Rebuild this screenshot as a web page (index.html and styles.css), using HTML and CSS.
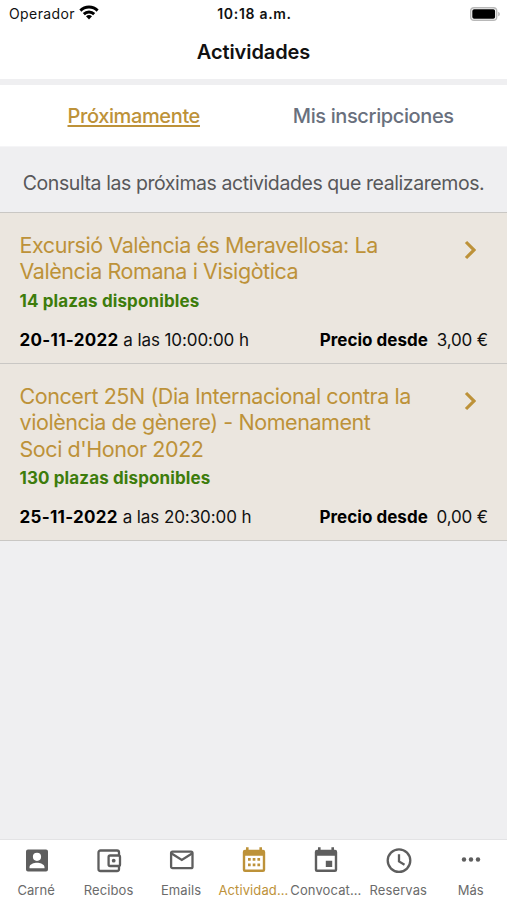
FILE: index.html
```html
<!DOCTYPE html>
<html lang="es">
<head>
  <meta charset="UTF-8" />
  <meta name="viewport" content="width=device-width, initial-scale=1" />
  <title>Actividades</title>
  <link rel="stylesheet" href="styles.css">
</head>
<body>

<header class="header">
  <div class="status-bar">
    <div class="carrier">
      <span>Operador</span>
      <svg class="wifi" viewBox="0 0 18 14">
        <path d="M0 4.3a12.7 12.7 0 0 1 18 0l-1.9 2a10.1 10.1 0 0 0-14.2 0z" />
        <path d="M3.2 7.5a8.2 8.2 0 0 1 11.6 0l-1.9 2a5.5 5.5 0 0 0-7.8 0z" />
        <path d="M6.2 10.6a4 4 0 0 1 5.6 0L9 13.5z" />
      </svg>
    </div>
    <span class="time">10:18 a.m.</span>
    <svg class="battery" viewBox="0 0 31 14">
      <rect x=".7" y=".7" width="26" height="12.6" rx="3.4" fill="#fff" stroke="#b8b8b8" stroke-width="1.4" />
      <rect x="2.3" y="2.3" width="22.8" height="9.4" rx="1.8" />
      <path d="M28.2 4.7c2.2.8 2.2 3.8 0 4.6z" fill="#b8b8b8" />
    </svg>
  </div>
  <h1>Actividades</h1>
</header>

<nav class="tabs">
  <a class="tab active"><span>Próximamente</span></a>
  <a class="tab"><span>Mis inscripciones</span></a>
</nav>

<main class="content">
  <p class="intro">Consulta las próximas actividades que realizaremos.</p>

  <article class="activity">
    <div class="activity-top">
      <h2>Excursió València és Meravellosa: La<br>València Romana i Visigòtica</h2>
      <svg class="chevron" viewBox="0 0 12 20"><path d="M2 2 9.9 10 2 18" /></svg>
    </div>
    <p class="places">14 plazas disponibles</p>
    <div class="details">
      <span class="date"><b>20-11-2022</b> <span>a las 10:00:00 h</span></span>
      <span class="price"><b>Precio desde</b> <span>3,00 €</span></span>
    </div>
  </article>

  <article class="activity">
    <div class="activity-top">
      <h2>Concert 25N (Dia Internacional contra la<br>violència de gènere) - Nomenament<br>Soci d'Honor 2022</h2>
      <svg class="chevron" viewBox="0 0 12 20"><path d="M2 2 9.9 10 2 18" /></svg>
    </div>
    <p class="places">130 plazas disponibles</p>
    <div class="details">
      <span class="date"><b>25-11-2022</b> <span>a las 20:30:00 h</span></span>
      <span class="price"><b>Precio desde</b> <span>0,00 €</span></span>
    </div>
  </article>
</main>

<nav class="bottom-bar">
  <a class="item">
    <svg viewBox="0 0 28 28"><path fill-rule="evenodd" d="M5 2.5h18a2 2 0 0 1 2 2v18a2 2 0 0 1-2 2H5a2 2 0 0 1-2-2v-18a2 2 0 0 1 2-2zm9 3.2a4.1 4.1 0 1 0 0 8.2 4.1 4.1 0 0 0 0-8.2zM6.5 21.2h15V20c0-2.8-4.8-4.2-7.5-4.2S6.500 17.200 6.500 20z" /></svg>
    <span>Carné</span>
  </a>
  <a class="item">
    <svg class="line" viewBox="0 0 28 28"><path d="M24 8.500v-3a2 2 0 0 0-2-2H5.500a2 2 0 0 0-2 2v16.500a2 2 0 0 0 2 2H22a2 2 0 0 0 2-2v-3" /><rect x="13.600" y="8.500" width="11.400" height="10.500" rx="1.500" /><circle class="dot" cx="18.700" cy="13.700" r="1.900" /></svg>
    <span>Recibos</span>
  </a>
  <a class="item">
    <svg class="line" viewBox="0 0 28 28"><rect x="3.1" y="4.6" width="21.4" height="16.600" rx="1.5" /><path d="m3.6 6.5 10.2 6.4L24 6.5" /></svg>
    <span>Emails</span>
  </a>
  <a class="item active">
    <svg viewBox="0 0 28 28"><path fill-rule="evenodd" d="M6 .2h2.6v2.500h10.8V.2H22v2.500h1a2.2 2.2 0 0 1 2.2 2.2v17.800a2.2 2.2 0 0 1-2.2 2.2H5a2.2 2.2 0 0 1-2.200-2.200V4.900A2.2 2.2 0 0 1 5 2.700h1zM5.2 8.700v13.8h17.6V8.700zM8 11.1h2.7v2.7H8zm4.7 0h2.7v2.7h-2.7zm4.7 0h2.7v2.7h-2.7zM8 16.6h2.7v2.7H8zm4.7 0h2.7v2.7h-2.7zm4.7 0h2.7v2.7h-2.7z" /></svg>
    <span>Actividad...</span>
  </a>
  <a class="item">
    <svg viewBox="0 0 28 28"><path fill-rule="evenodd" d="M6 .2h2.6v2.500h10.8V.2H22v2.500h1a2.2 2.2 0 0 1 2.2 2.2v17.800a2.2 2.2 0 0 1-2.2 2.2H5a2.2 2.2 0 0 1-2.200-2.200V4.900A2.2 2.2 0 0 1 5 2.700h1zM5.2 8.700v13.8h17.6V8.700zm8.6 5h6.4v6.2h-6.4z" /></svg>
    <span>Convocat...</span>
  </a>
  <a class="item">
    <svg class="line" viewBox="0 0 28 28"><circle cx="14" cy="13.6" r="11.3" /><path d="M14 7.2v7.2l5.5 3.3" /></svg>
    <span>Reservas</span>
  </a>
  <a class="item">
    <svg viewBox="0 0 28 28"><circle cx="7" cy="12.500" r="2.200" /><circle cx="14" cy="12.500" r="2.200" /><circle cx="21" cy="12.500" r="2.200" /></svg>
    <span>Más</span>
  </a>
</nav>

</body>
</html>
```
FILE: styles.css
```css
* {
  box-sizing: border-box;
}
body {
  margin: 0;
  height: 900px;
  display: flex;
  flex-direction: column;
  font-family: Inter, "Liberation Sans", sans-serif;
  background: #efeff1;
  color: #111;
  overflow: hidden;
  white-space: nowrap;
}
h1, h2, p {
  margin: 0;
}
.header {
  height: 79px;
  background: #fff;
}
.status-bar {
  height: 27px;
  padding: 0 6px 0 9px;
  display: grid;
  grid-template-columns: 1fr auto 1fr;
  align-items: center;
  font-size: 14px;
}
.carrier {
  display: flex;
  align-items: center;
  gap: 4px;
  letter-spacing: 0.4px;
}
.wifi {
  width: 20px;
  height: 15px;
  margin-top: -2px;
}
.time {
  margin-right: 1px;
  font-weight: 600;
  letter-spacing: 0.7px;
}
.battery {
  width: 31px;
  height: 14px;
  justify-self: end;
}
h1 {
  font-size: 20px;
  line-height: 51px;
  font-weight: 600;
  letter-spacing: -0.1px;
  text-align: center;
}
.tabs {
  height: 62px;
  margin-top: 6px;
  padding: 0 14px;
  display: flex;
  background: #fff;
  border-bottom: 1px solid #f5f5f7;
}
.tab {
  flex: 1;
  font-size: 20px;
  line-height: 62px;
  font-weight: 500;
  letter-spacing: -0.38px;
  text-align: center;
  color: #69707d;
}
.tab.active {
  color: #bd9239;
  text-decoration: underline;
  text-decoration-thickness: 1.5px;
  text-underline-offset: 2px;
}
.content {
  flex: 1;
}
.intro {
  height: 65px;
  line-height: 72px;
  font-size: 19.5px;
  letter-spacing: -0.42px;
  text-align: center;
  color: #58585a;
}
.activity {
  padding: 19px 19px 11px 19.5px;
  background: #ebe6df;
  border-top: 1px solid #c9c7c4;
}
.activity:last-child {
  border-bottom: 1px solid #c9c7c4;
}
.activity-top {
  display: flex;
  justify-content: space-between;
}
h2 {
  font-size: 21.5px;
  line-height: 26.4px;
  font-weight: 400;
  letter-spacing: -0.43px;
  color: #bd9239;
}
.chevron {
  width: 12px;
  height: 20px;
  margin: 8px 12px 0 0;
  fill: none;
  stroke: #bd9239;
  stroke-width: 3.2;
}
.places {
  margin-top: 4px;
  font-size: 17px;
  line-height: 24px;
  font-weight: 700;
  letter-spacing: 0.12px;
  color: #3d7c0c;
}
.details {
  margin-top: 15px;
  display: flex;
  justify-content: space-between;
  font-size: 17px;
  line-height: 24px;
}
.details b {
  font-weight: 700;
  color: #000;
}
.date b {
  letter-spacing: 0.3px;
}
.date span {
  letter-spacing: -0.08px;
}
.price b {
  margin-right: 4px;
  letter-spacing: 0.03px;
}
.price span {
  letter-spacing: -0.15px;
}
.bottom-bar {
  height: 61px;
  display: flex;
  background: #fff;
  border-top: 1px solid #e3e3e5;
}
.item {
  flex: 1 1 0;
  min-width: 0;
  padding-top: 7px;
  display: flex;
  flex-direction: column;
  align-items: center;
  font-size: 13px;
  line-height: 16px;
  letter-spacing: 0.1px;
  color: #6b6b6b;
}
.item svg {
  width: 28px;
  height: 28px;
  margin: 0 0 7px 1px;
  fill: #5e5e5e;
}
.item svg.line {
  fill: none;
  stroke: #5e5e5e;
  stroke-width: 2.3;
}
.item .dot {
  fill: #5e5e5e;
  stroke: none;
}
.item.active {
  color: #bd9239;
}
.item.active svg {
  fill: #bd9239;
}
```
